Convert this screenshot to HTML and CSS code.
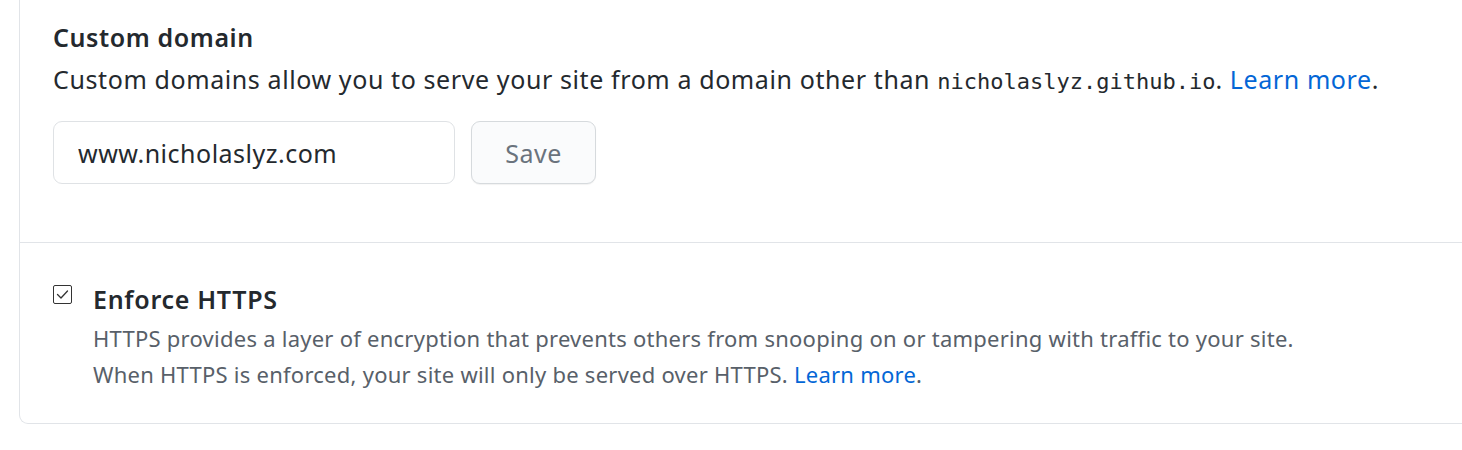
FILE: index.html
```html
<!DOCTYPE html>
<html lang="en">
<head>
<meta charset="utf-8">
<title>Custom domain</title>
<link rel="stylesheet" href="styles.css">
</head>
<body>
<div class="card">
  <section class="domain">
    <h3 class="title">Custom domain</h3>
    <p class="desc">Custom domains allow you to serve your site from a domain other than <code class="mono">nicholaslyz.github.io</code>. <a class="link" href="#">Learn more</a>.</p>
    <form class="domain-form">
      <input class="domain-input" type="text" value="www.nicholaslyz.com">
      <button class="save-btn" type="button">Save</button>
    </form>
  </section>
  <section class="https">
    <div class="https-row">
      <span class="checkbox">
        <svg width="19" height="19" viewBox="0 0 19 19">
          <rect x="0.5" y="0.5" width="18" height="18" rx="1.5" fill="#fff" stroke="#333" stroke-width="1"/>
          <path d="M4.5 9.5 L8 13 L14.5 6" fill="none" stroke="#333" stroke-width="1.3" stroke-linecap="round" stroke-linejoin="round"/>
        </svg>
      </span>
      <div class="https-body">
        <div class="https-title">Enforce HTTPS</div>
        <p class="https-desc">HTTPS provides a layer of encryption that prevents others from snooping on or tampering with traffic to your site.<br>When HTTPS is enforced, your site will only be served over HTTPS. <a class="link" href="#">Learn more</a>.</p>
      </div>
    </div>
  </section>
</div>
</body>
</html>
```

FILE: styles.css
```css
html, body {
  margin: 0;
  padding: 0;
  background: #fff;
  overflow: hidden;
}
body {
  font-family: "Noto Sans", "Open Sans", sans-serif;
  color: #24292e;
}
.card {
  margin-left: 19px;
  margin-right: -40px;
  border: 1px solid #e1e4e8;
  border-top: 0;
  border-radius: 0 0 9px 9px;
}
.domain {
  padding: 19px 33px 58px;
  border-bottom: 1px solid #e1e4e8;
}
.title {
  margin: 0;
  font-size: 25px;
  line-height: 36px;
  font-weight: 600;
  letter-spacing: 0.6px;
}
.desc {
  margin: 6px 0 0;
  font-size: 25px;
  line-height: 36px;
  letter-spacing: 0.6px;
}
.mono {
  font-family: "DejaVu Sans Mono", "Liberation Mono", monospace;
  font-size: 22px;
  letter-spacing: 0;
}
.link {
  color: #0366d6;
  text-decoration: none;
}
.domain-form {
  display: flex;
  gap: 16px;
  margin-top: 21px;
}
.domain-input {
  box-sizing: border-box;
  width: 402px;
  height: 63px;
  padding: 0 24px;
  border: 1px solid #dfe2e5;
  border-radius: 9px;
  font-family: inherit;
  font-size: 25px;
  letter-spacing: 0.5px;
  color: #24292e;
  background: #fff;
  outline: none;
}
.save-btn {
  box-sizing: border-box;
  width: 125px;
  height: 63px;
  border: 1px solid #d6dadd;
  border-radius: 9px;
  background: #fafbfc;
  box-shadow: 0 1px 1px rgba(27, 31, 35, 0.06);
  font-family: inherit;
  font-size: 25px;
  letter-spacing: 0.5px;
  color: #6a737d;
}
.https {
  padding: 38px 33px 31px;
}
.https-row {
  display: flex;
  gap: 21px;
}
.checkbox {
  display: block;
  width: 19px;
  height: 19px;
  margin-top: 4px;
}
.checkbox svg {
  display: block;
}
.https-title {
  font-size: 25px;
  line-height: 36px;
  font-weight: 600;
  letter-spacing: 0.7px;
}
.https-desc {
  margin: 3px 0 0;
  font-size: 22px;
  line-height: 36px;
  letter-spacing: 0.25px;
  color: #586069;
}
```
